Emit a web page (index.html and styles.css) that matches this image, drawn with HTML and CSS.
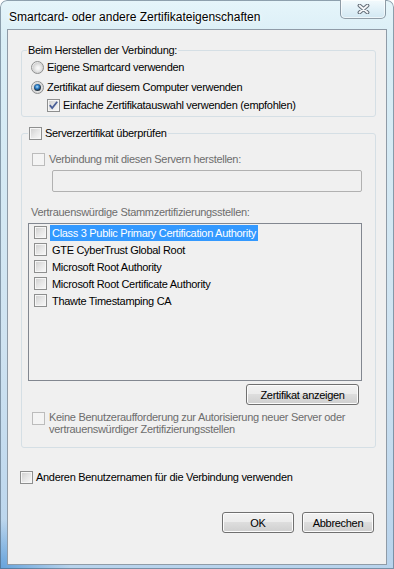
FILE: index.html
```html
<!DOCTYPE html>
<html lang="de">
<head>
    <meta charset="UTF-8">
    <meta name="viewport" content="width=device-width, initial-scale=1.0">
    <title>Smartcard- oder andere Zertifikateigenschaften</title>
    <link rel="stylesheet" href="styles.css">
</head>
<body>
    <div class="window">
        <div class="titlebar">
            <span class="title">Smartcard- oder andere Zertifikateigenschaften</span>
            <button class="close" type="button" aria-label="Schließen">
                <svg width="13" height="10" viewBox="0 0 13 10">
                    <path d="M2.5 1.5 L10.5 8.5 M10.5 1.5 L2.5 8.5" stroke="#646e79" stroke-width="3.8" stroke-linecap="round"/>
                    <path d="M2.5 1.5 L10.5 8.5 M10.5 1.5 L2.5 8.5" stroke="#f6f8fa" stroke-width="1.8" stroke-linecap="round"/>
                </svg>
            </button>
        </div>
        <div class="client">
            <fieldset class="group group-connect">
                <legend>Beim Herstellen der Verbindung:</legend>
                <label class="row"><span class="radio"></span>Eigene Smartcard verwenden</label>
                <label class="row row-second"><span class="radio checked"></span>Zertifikat auf diesem Computer verwenden</label>
                <label class="row row-third">
                    <span class="check">
                        <svg width="11" height="11" viewBox="0 0 11 11"><polyline points="1.8,5.2 4.2,8 9.2,1.8" fill="none" stroke="#4a5f97" stroke-width="1.8"/></svg>
                    </span>Einfache Zertifikatauswahl verwenden (empfohlen)
                </label>
            </fieldset>

            <fieldset class="group group-server">
                <legend><label class="row"><span class="check"></span>Serverzertifikat überprüfen</label></legend>
                <label class="row disabled servers"><span class="check"></span>Verbindung mit diesen Servern herstellen:</label>
                <div class="textbox"></div>
                <div class="caption disabled">Vertrauenswürdige Stammzertifizierungsstellen:</div>
                <ul class="listbox">
                    <li><span class="check"></span><span class="item selected">Class 3 Public Primary Certification Authority</span></li>
                    <li><span class="check"></span><span class="item">GTE CyberTrust Global Root</span></li>
                    <li><span class="check"></span><span class="item">Microsoft Root Authority</span></li>
                    <li><span class="check"></span><span class="item">Microsoft Root Certificate Authority</span></li>
                    <li><span class="check"></span><span class="item">Thawte Timestamping CA</span></li>
                </ul>
                <div class="list-actions">
                    <button class="btn btn-wide" type="button">Zertifikat anzeigen</button>
                </div>
                <label class="row multi disabled">
                    <span class="check"></span>
                    <span>Keine Benutzeraufforderung zur Autorisierung neuer Server oder<br>vertrauenswürdiger Zertifizierungsstellen</span>
                </label>
            </fieldset>

            <label class="row other-user"><span class="check"></span>Anderen Benutzernamen für die Verbindung verwenden</label>

            <div class="dialog-buttons">
                <button class="btn" type="button">OK</button>
                <button class="btn" type="button">Abbrechen</button>
            </div>
        </div>
    </div>
</body>
</html>
```

FILE: styles.css
```css
* {
    box-sizing: border-box;
}
body {
    margin: 0;
    background: #fff;
    font-family: "Liberation Sans", Arial, sans-serif;
    font-size: 11px;
    letter-spacing: -0.3px;
    color: #000;
}
.window {
    width: 394px;
    height: 569px;
    padding: 0 7px 4px;
    display: flex;
    flex-direction: column;
    border-radius: 7px 7px 0 0;
    background:
        radial-gradient(ellipse 70px 50px at 0% 100%, rgba(80,150,215,0.8), rgba(80,150,215,0)),
        linear-gradient(180deg, #e6f5fa 0%, #d9eef6 40px, #cfe3f1 60%, #b8d3ec 100%);
    box-shadow: inset 0 0 0 1px rgba(70,90,110,0.55);
}
.titlebar {
    height: 29px;
    display: flex;
    justify-content: space-between;
    align-items: flex-start;
}
.title {
    padding: 10px 0 0 2px;
    font-size: 12px;
    line-height: 14px;
    letter-spacing: 0;
    text-shadow: 0 0 6px #fff, 0 0 3px #fff;
}
.close {
    width: 46px;
    height: 19px;
    margin-right: 1px;
    padding: 0;
    display: flex;
    align-items: center;
    justify-content: center;
    border: 1px solid rgba(80,95,110,0.6);
    border-top: none;
    border-radius: 0 0 5px 5px;
    background: linear-gradient(180deg, #f3fafd 0%, #e2f1f8 50%, #d3e8f2 100%);
    box-shadow: inset 0 0 0 1px rgba(255,255,255,0.6);
}
.client {
    flex: 1;
    border: 1px solid #8f9ba7;
    background: #f0f0f0;
    padding: 0 10px 0 13px;
}

/* group boxes */
.group {
    margin: 0;
    min-width: 0;
    border: 1px solid #d5dfe5;
    border-radius: 3px;
}
.group legend {
    padding: 0 1px;
    line-height: 14px;
    height: 14px;
}
.group-connect {
    margin-top: 13px;
    padding: 3px 10px 4px 9px;
}
.group-connect legend {
    margin-left: -4px;
}
.group-server {
    margin-top: 9px;
    padding: 0 13px 12px 6px;
}

/* rows with a radio or check box */
.row {
    display: flex;
    align-items: center;
    gap: 3px;
    height: 14px;
    line-height: 14px;
    white-space: nowrap;
}
.row-second {
    margin-top: 6px;
}
.row-third {
    margin-top: 4px;
    margin-left: 16px;
}
.disabled {
    color: #6d6d6d;
}
.servers {
    margin: 12px 0 0 4px;
    gap: 4px;
}
.multi {
    height: auto;
    align-items: flex-start;
    line-height: 12px;
    margin: 6px 0 0 4px;
    gap: 4px;
}
.multi .check {
    margin-top: 1px;
}
.other-user {
    margin: 22px 0 0 -1px;
}

.radio,
.check {
    flex: none;
    width: 13px;
    height: 13px;
    position: relative;
    border: 1px solid #8e8f8f;
}
.radio {
    border-radius: 50%;
    background: radial-gradient(circle at 55% 55%, #fbfbfb 0, #f0f0f0 2px, #d4d4d4 5px, #eeeeee 6px);
}
.radio.checked::after {
    content: "";
    position: absolute;
    left: 2px;
    top: 2px;
    width: 7px;
    height: 7px;
    border-radius: 50%;
    background: radial-gradient(circle at 45% 40%, #b6e2fb 0, #3a8ad0 1.6px, #1b568f 2.8px, #263440 3.5px);
}
.check {
    background: linear-gradient(135deg, #cdcdcd 0%, #e6e6e6 50%, #f9f9f9 100%);
    box-shadow: inset 0 0 0 1px #f6f6f6;
}
.check svg {
    display: block;
}
.disabled .check {
    border-color: #bcbcbc;
    background: #f4f4f4;
    box-shadow: none;
}

.textbox {
    margin: 4px 0 0 24px;
    width: 310px;
    height: 22px;
    border: 1px solid #b1b1b1;
    border-radius: 2px;
    background: #f0f0f0;
}
.caption {
    margin: 13px 0 0 3px;
    height: 14px;
    line-height: 14px;
}

.listbox {
    margin: 4px 0 0;
    padding: 0;
    list-style: none;
    width: 334px;
    height: 158px;
    border: 1px solid #828790;
    background: #f0f0f0;
}
.listbox li {
    display: flex;
    align-items: center;
    gap: 3px;
    height: 17px;
    padding-left: 5px;
    white-space: nowrap;
}
.item {
    padding: 0 2px;
    line-height: 16px;
}
.item.selected {
    background: #3399ff;
    color: #fff;
}

.list-actions {
    width: 334px;
    display: flex;
    justify-content: flex-end;
    padding-right: 3px;
    margin-top: 3px;
}
.btn {
    width: 72px;
    height: 21px;
    padding: 0;
    border: 1px solid #707070;
    border-radius: 3px;
    background: linear-gradient(180deg, #f2f2f2 0%, #ebebeb 50%, #dddddd 50%, #cfcfcf 100%);
    box-shadow: inset 0 0 0 1px #fcfcfc;
    font: inherit;
    letter-spacing: inherit;
    color: #000;
}
.btn-wide {
    width: 113px;
}
.dialog-buttons {
    display: flex;
    justify-content: flex-end;
    gap: 8px;
    padding-right: 2px;
    margin-top: 28px;
}
```
